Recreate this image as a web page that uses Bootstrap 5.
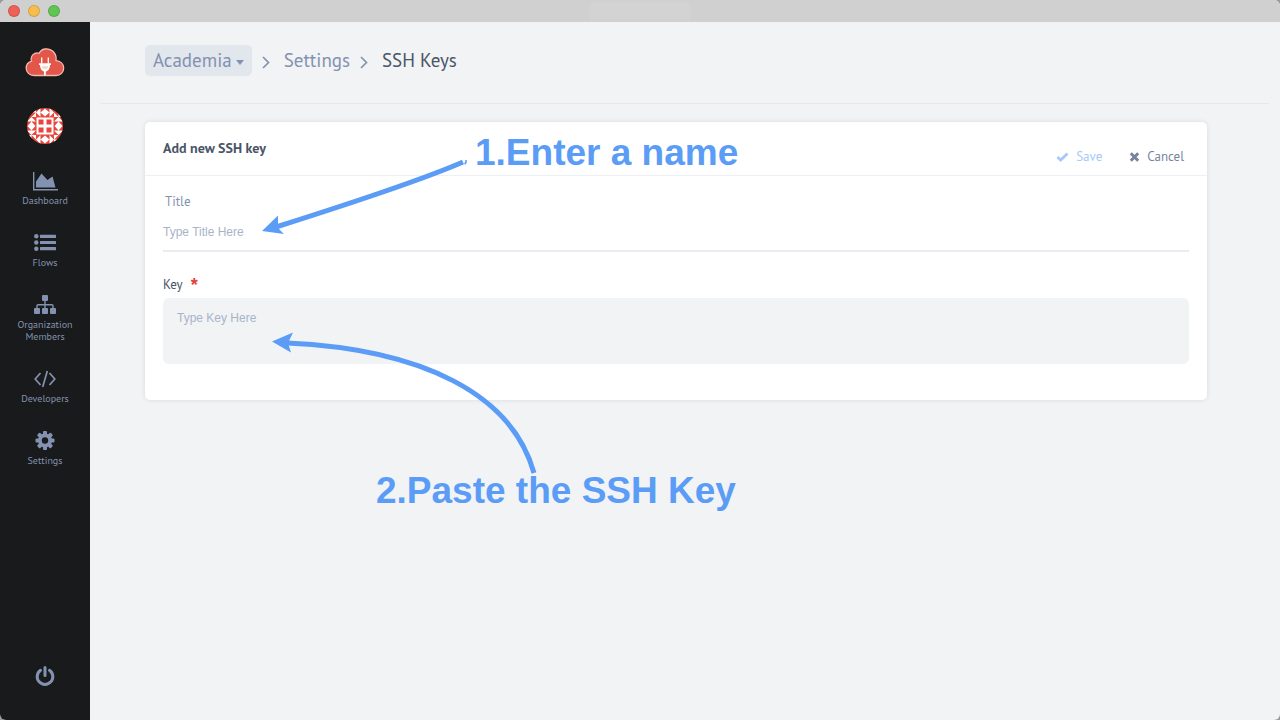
<!DOCTYPE html>
<html lang="en">
<head>
<meta charset="utf-8">
<meta name="viewport" content="width=device-width, initial-scale=1">
<title>SSH Keys</title>
<link href="https://cdn.jsdelivr.net/npm/bootstrap@5.3.0/dist/css/bootstrap.min.css" rel="stylesheet">
<style>
  :root { --slate: #8392b0; --ink: #4b5568; --canvas: #f1f3f5; --note: #5b9cf6; }
  body { font-family: "PT Sans", Lato, sans-serif; background: #999; color: var(--ink); }
  .window { background: var(--canvas); border-radius: 6px; overflow: hidden; }
  .titlebar { height: 22px; background: #d0d0d0; padding-left: 8px; }
  .light { width: 12px; height: 12px; border-radius: 50%; border: 1px solid #0002; }
  .light-close { background: #ee6158; }
  .light-min { background: #f6bd4c; }
  .light-max { background: #60c553; }
  .title-patch { width: 100px; height: 17px; background: #d3d3d3; }
  .sidebar { width: 90px; background: #191a1b; padding: 26px 0 33px; }
  .sidebar a { color: var(--slate); text-decoration: none; font-size: 10px; line-height: 12px; text-align: center; }
  .sidebar svg { display: block; margin: 0 auto; }
  .sidebar .avatar { margin-top: 30px; }
  .sidebar .side-label { display: block; margin-top: 4px; }
  .side-menu { gap: 26px; margin-top: 27px; }
  .page-head { margin: 0 11px 18px 10px; padding: 23px 45px 27px; border-bottom: 1px solid #e6e8eb; font-size: 19px; line-height: 24px; }
  .page-head a { color: var(--slate); text-decoration: none; }
  .page-head .crumb-text { margin-bottom: 2px; }
  .org-btn { background: #e2e6ed; color: var(--slate); font-size: 19px; line-height: 23px; padding: 4px 8px; border: 0; border-radius: 5px; }
  .org-btn:hover { background: #d8dde6; color: var(--slate); }
  .org-btn::after { border-width: 5px 4px 0; margin-left: 4px; vertical-align: 2px; }
  .sep { margin: 3px 14px 0 10px; }
  .panel { margin: 0 73px 0 55px; background: #fff; border-radius: 5px; box-shadow: 0 0 5px #0000001a; }
  .panel-head { padding: 0 23px 0 18px; height: 54px; border-bottom: 1px solid #eff0f3; }
  .panel-head h1 { font-size: 14px; line-height: 20px; margin: 0; }
  .panel-head .actions { gap: 27px; padding-bottom: 9px; }
  .panel-head button { font-size: 13px; line-height: 18px; padding: 0; border: 0; gap: 7px; color: #77849d; }
  .panel-head button.save, .panel-head button.save:disabled { color: #a6caf8; opacity: 1; border: 0; }
  .panel-body { padding: 16px 18px 36px; font-size: 13px; line-height: 20px; }
  .panel-body .form-control { font: 12px/18px "Liberation Sans", sans-serif; border: 0; }
  .panel-body .form-control::placeholder { color: #a9b3c8; }
  .title-label { color: var(--slate); padding-left: 2px; }
  .key-label { margin-top: 23px; margin-bottom: 3px; }
  .required { color: #e0413d; font: bold 18px/20px "Liberation Sans", sans-serif; }
  .line-input.form-control { padding: 11px 0 9px; border-bottom: 2px solid #ebecf1; border-radius: 0; }
  .key-area.form-control { background: var(--canvas); border-radius: 6px; padding: 11px 14px; height: 66px; resize: none; }
  .note { position: absolute; color: var(--note); font: bold 37px/42px "Liberation Sans", sans-serif; white-space: nowrap; pointer-events: none; }
  .note-name { left: 385px; top: 110px; }
  .note-key { left: 286px; top: 448px; }
  .note-arrows { position: absolute; left: 160px; top: 128px; pointer-events: none; }
</style>
</head>
<body>
<div class="window min-vh-100 d-flex flex-column">
  <header class="titlebar d-flex align-items-center position-relative">
    <div class="d-flex gap-2">
      <span class="light light-close"></span>
      <span class="light light-min"></span>
      <span class="light light-max"></span>
    </div>
    <span class="title-patch position-absolute start-50 top-50 translate-middle"></span>
  </header>
  <div class="d-flex flex-grow-1">
    <nav class="sidebar d-flex flex-column flex-shrink-0" aria-label="Main">
      <a href="#" aria-label="Home">
        <svg width="40" height="30" viewBox="0 0 40 30">
          <path d="M9 27.500C4.500 27.500 1.200 24.200 1.200 20.200C1.200 16.700 3.500 14.200 6.500 13.200C4.800 7.800 9.600 3.700 14.200 5.300C16.500.2 23 -.2 27 2.600C30.400 5 31.500 9 31 12.600C35.500 13 38.700 16 38.700 20C38.700 24.300 35.500 27.500 31 27.500Z" fill="#e2574a" stroke="#f3b8b0" stroke-width="1.300"/>
          <path d="M16.700 9.500v6M23.300 9.500v6" stroke="#fff" stroke-width="1.300"/>
          <path d="M14 15.200h12v1.800h-1c0 3.500-1.500 5.500-3.500 6.300l-.7.500v3.500h-1.800v-3.500l-.5-.5c-2-.8-3.500-2.800-3.500-6.300h-1z" fill="#fff"/>
          <path d="M16.500 18.200h7l-1.500 2.500h-4z" fill="#f6d3cf"/>
        </svg>
      </a>
      <a href="#" class="avatar" aria-label="Account">
        <svg width="36" height="36" viewBox="0 0 36 36">
          <defs>
            <clipPath id="round"><circle cx="18" cy="18" r="18"/></clipPath>
            <g id="edge" fill="#fff">
              <path d="M9 4.500L13.500 0v9zM13.500 4.500L18 .5v8zM22.500 4.500L18 .5v8zM27 4.500L22.500 0v9z"/>
              <path d="M4.500 9L9 4.500V9zM4.500 4.500L9 0v4.500z"/>
            </g>
          </defs>
          <g clip-path="url(#round)">
            <path d="M0 0h36v36H0z" fill="#e8453c"/>
            <use href="#edge"/>
            <use href="#edge" transform="rotate(90 18 18)"/>
            <use href="#edge" transform="rotate(180 18 18)"/>
            <use href="#edge" transform="rotate(270 18 18)"/>
            <path d="M9.500 9.500h17v17h-17z" fill="#fff"/>
            <path d="M11.500 11.500h5v5h-5zM19.500 11.500h5v5h-5zM11.500 19.500h5v5h-5zM19.500 19.500h5v5h-5z" fill="#e8453c"/>
          </g>
        </svg>
      </a>
      <div class="side-menu d-flex flex-column">
        <a href="#">
          <svg width="26" height="20" viewBox="0 0 26 20" fill="currentColor"><path d="M1 1h1.400v17H26v1.500H1zM4 16.500V10.500L9.500 2.500 15.500 9 20.500 5.500 23.500 16.500z"/></svg>
          <span class="side-label">Dashboard</span>
        </a>
        <a href="#">
          <svg width="22" height="20" viewBox="0 0 22 20" fill="currentColor"><circle cx="2.300" cy="3.300" r="2.200"/><circle cx="2.300" cy="9.500" r="2.200"/><circle cx="2.300" cy="15.700" r="2.200"/><rect x="6" y="1.700" width="16" height="3.200" rx=".5"/><rect x="6" y="7.900" width="16" height="3.200" rx=".5"/><rect x="6" y="14.100" width="16" height="3.200" rx=".5"/></svg>
          <span class="side-label">Flows</span>
        </a>
        <a href="#">
          <svg width="22" height="20" viewBox="0 0 22 20" fill="currentColor"><rect x="8" y="0" width="6" height="6" rx="1"/><rect x="0" y="13" width="6" height="6" rx="1"/><rect x="8" y="13" width="6" height="6" rx="1"/><rect x="16" y="13" width="6" height="6" rx="1"/><path d="M11 5v9M3 14v-3.200q0-1 1-1h14q1 0 1 1V14" fill="none" stroke="currentColor" stroke-width="1.400"/></svg>
          <span class="side-label">Organization<br>Members</span>
        </a>
        <a href="#">
          <svg width="22" height="20" viewBox="0 0 22 20" fill="none" stroke="currentColor" stroke-width="1.700"><path d="M6.500 4L1.200 10l5.300 6M15.500 4L20.800 10l-5.300 6M13.300 2L8.700 18"/></svg>
          <span class="side-label">Developers</span>
        </a>
        <a href="#">
          <svg width="20" height="20" viewBox="0 0 20 20"><g fill="currentColor"><circle cx="10" cy="9.500" r="7"/><rect x="8" y="0" width="4" height="19" rx="1"/><rect x="8" y="0" width="4" height="19" rx="1" transform="rotate(45 10 9.500)"/><rect x="8" y="0" width="4" height="19" rx="1" transform="rotate(90 10 9.500)"/><rect x="8" y="0" width="4" height="19" rx="1" transform="rotate(135 10 9.500)"/></g><circle cx="10" cy="9.500" r="3.200" fill="#191a1b"/></svg>
          <span class="side-label">Settings</span>
        </a>
      </div>
      <a href="#" class="mt-auto" aria-label="Sign out">
        <svg width="20" height="22" viewBox="0 0 20 22" fill="none" stroke="currentColor" stroke-width="3" stroke-linecap="round"><path d="M10 2.500v8M5.500 5.300a7.800 7.800 0 1 0 9 0"/></svg>
      </a>
    </nav>
    <main class="flex-grow-1 position-relative">
      <div class="page-head">
        <nav class="d-flex align-items-center" aria-label="Breadcrumb">
          <button type="button" class="btn org-btn dropdown-toggle">Academia</button>
          <svg class="sep" width="8" height="13" viewBox="0 0 8 13" fill="none" stroke="#8392b0" stroke-width="1.700"><path d="M1 1l5.500 5.500L1 12"/></svg>
          <a href="#" class="crumb-text">Settings</a>
          <svg class="sep" width="8" height="13" viewBox="0 0 8 13" fill="none" stroke="#8392b0" stroke-width="1.700"><path d="M1 1l5.500 5.500L1 12"/></svg>
          <span class="crumb-text">SSH Keys</span>
        </nav>
      </div>
      <form class="panel">
        <div class="panel-head d-flex justify-content-between">
          <h1 class="fw-bold mt-3">Add new SSH key</h1>
          <div class="actions d-flex align-items-end">
            <button type="submit" class="btn save d-flex align-items-center" disabled>
              <svg width="13" height="10" viewBox="0 0 13 10"><path d="M1.500 5l3.200 3L11.500 1.500" fill="none" stroke="currentColor" stroke-width="2.800"/></svg>Save</button>
            <button type="button" class="btn d-flex align-items-center">
              <svg width="11" height="10" viewBox="0 0 11 10"><path d="M1.800 1.300l7.400 7.400M9.200 1.300L1.800 8.700" fill="none" stroke="currentColor" stroke-width="3"/></svg>Cancel</button>
          </div>
        </div>
        <div class="panel-body">
          <label for="title" class="title-label d-block">Title</label>
          <input id="title" type="text" class="form-control line-input" placeholder="Type Title Here">
          <label for="key" class="key-label d-flex">Key <span class="required ms-1 ps-1">*</span></label>
          <textarea id="key" class="form-control key-area" placeholder="Type Key Here"></textarea>
        </div>
      </form>
      <svg class="note-arrows" width="300" height="330" viewBox="0 0 300 330" fill="none" stroke="#5b9cf6" stroke-width="5">
        <path d="M26 77Q165 33 213 12"/>
        <path d="M214.500 14q2-1 1.500-4" stroke-width="1.500"/>
        <path d="M12 81L28 65.500 28 74 29 79 34 84z" fill="#5b9cf6" stroke="none"/>
        <path d="M37 193C172 199 262 244 284 323"/>
        <path d="M22 191.500L43 182.500 38 193 41 202.500z" fill="#5b9cf6" stroke="none"/>
      </svg>
      <div class="note note-name">1.Enter a name</div>
      <div class="note note-key">2.Paste the SSH Key</div>
    </main>
  </div>
</div>
<script src="https://cdn.jsdelivr.net/npm/bootstrap@5.3.0/dist/js/bootstrap.bundle.min.js"></script>
</body>
</html>
